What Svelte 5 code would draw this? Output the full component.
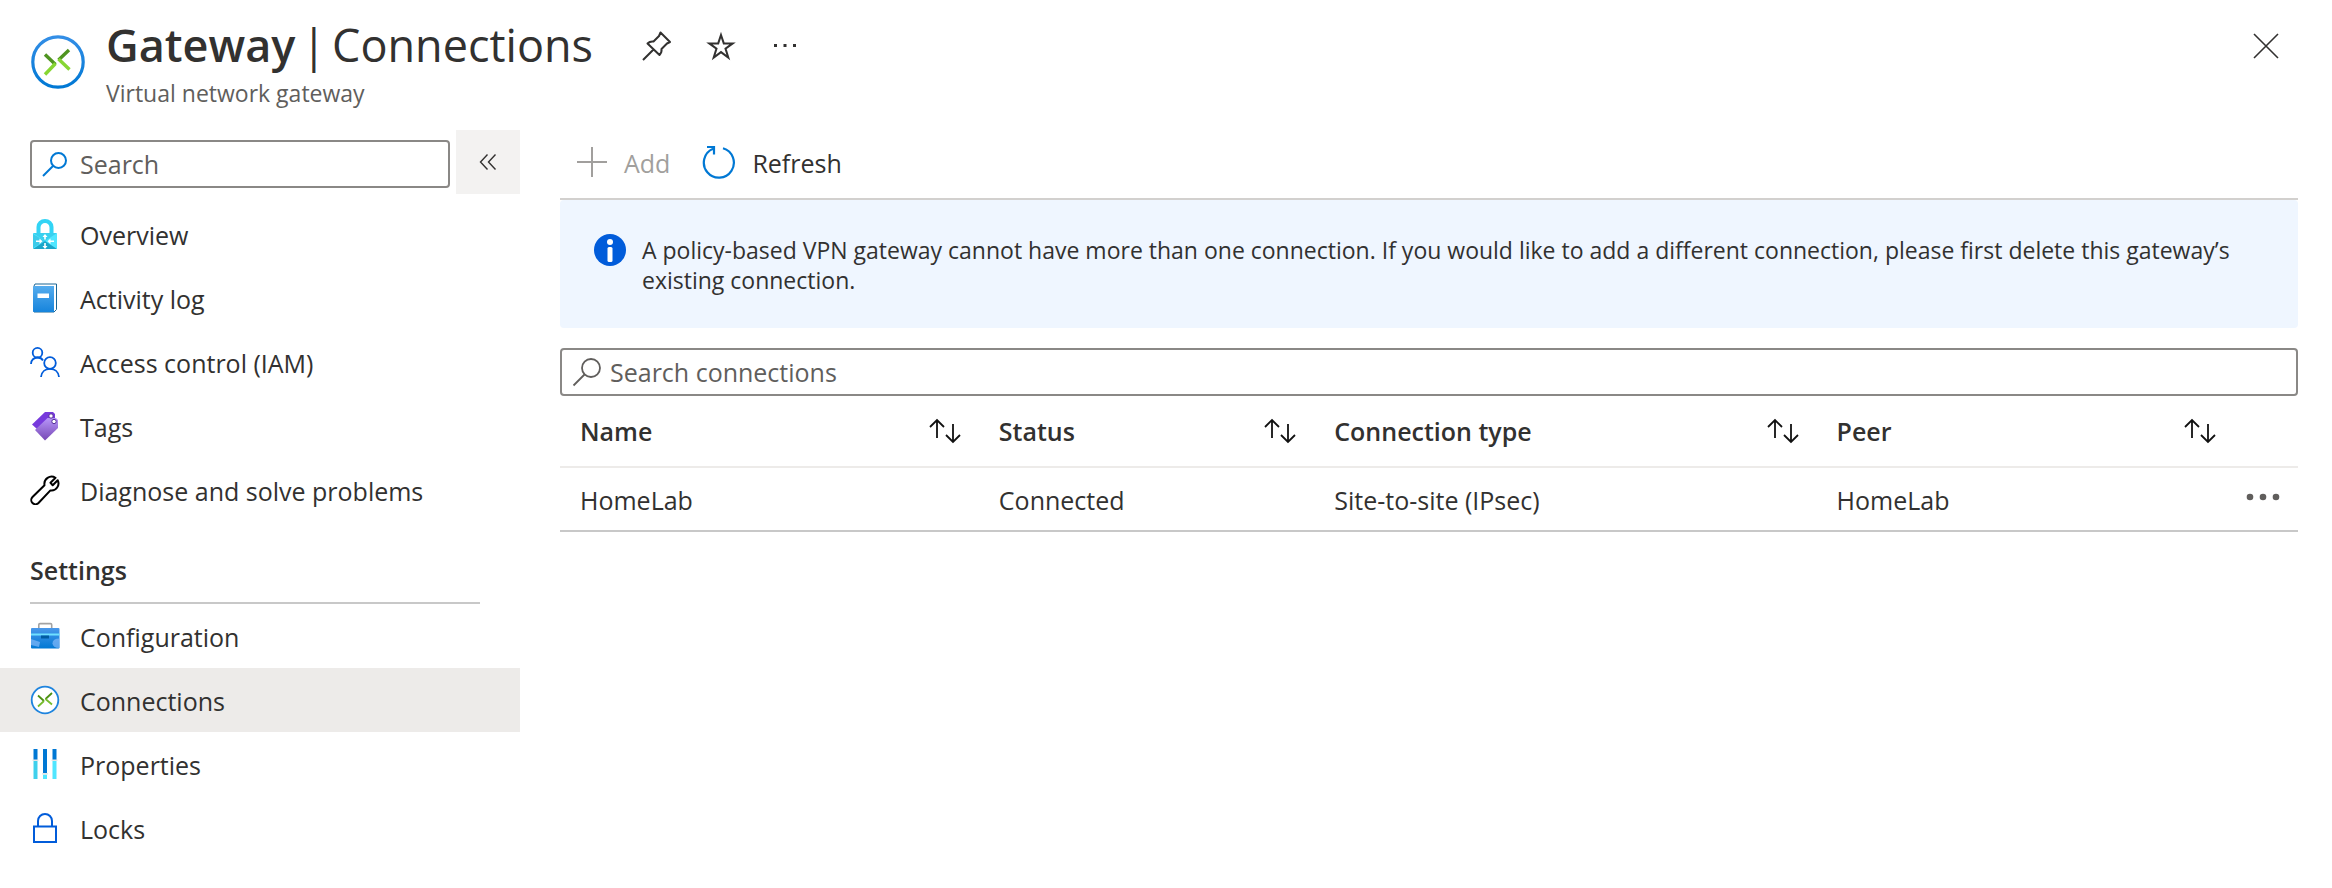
<script>
  const general = [
    { label: 'Overview', icon: 'gatewayLock' },
    { label: 'Activity log', icon: 'book' },
    { label: 'Access control (IAM)', icon: 'people' },
    { label: 'Tags', icon: 'tags' },
    { label: 'Diagnose and solve problems', icon: 'wrench' },
  ];
  const settings = [
    { label: 'Configuration', icon: 'toolbox' },
    { label: 'Connections', icon: 'connection', current: true },
    { label: 'Properties', icon: 'bars' },
    { label: 'Locks', icon: 'lock' },
  ];
  const columns = ['Name', 'Status', 'Connection type', 'Peer'];
  const rows = [['HomeLab', 'Connected', 'Site-to-site (IPsec)', 'HomeLab']];
</script>

{#snippet navIcon(name)}
  <svg class="nav-icon" viewBox="0 0 30 30" aria-hidden="true">
    {#if name === 'gatewayLock'}
      <path d="M6.500 15V8a8.500 8 0 0 1 17 0v7h-4V8.500a4.500 4.500 0 0 0-9 0V15z" fill="#32d4f5" />
      <rect x="3" y="14" width="24" height="16" rx="1" fill="#50e6ff" />
      <path d="M3 15v14l12-7z" fill="#3ccbea" />
      <path d="M3 14h24l-12 8z" fill="#38d0ef" />
      <path d="M3 30l12-8 12 8z" fill="#1ba6c9" />
      <path d="M15 15l2.500 3h-1.700V20.500h-1.600v-2.500h-1.700zM15 30l2.500-3h-1.700V24h-1.600v3h-1.700zM12.500 22.200l-3-2.700v2H6v1.500h3.500v2zM17.500 22.200l3-2.700v2H24v1.500h-3.500v2z" fill="#fff" />
    {:else if name === 'book'}
      <defs>
        <linearGradient id="cover" x1="0" y1="0" x2="0" y2="1"><stop offset="0" stop-color="#55acee" /><stop offset="1" stop-color="#1684dc" /></linearGradient>
      </defs>
      <path d="M5 1h21.500v25.500L24 29H4V3z" fill="#fff" stroke="#1b6695" stroke-width="1" />
      <path d="M4.500 3H24v26H4a1 1 0 0 1-1-1V4.500A1.500 1.500 0 0 1 4.500 3z" fill="url(#cover)" />
      <rect x="7.500" y="10.500" width="11.500" height="4.500" fill="#fff" />
    {:else if name === 'people'}
      <g fill="none" stroke="#015cda" stroke-width="1.800">
        <circle cx="7.500" cy="5.700" r="4.800" />
        <path d="M1 17c0-4 3-6.500 6.500-6.500 2.500 0 4.500 1 5.500 3" />
        <circle cx="20" cy="16" r="5.800" />
        <path d="M11 30c.5-5.500 4.500-8.200 9-8.200s8.500 2.700 9 8.200" />
      </g>
    {:else if name === 'tags'}
      <defs>
        <linearGradient id="tag" x1="0" y1="0" x2="0" y2="1"><stop offset="0" stop-color="#b796f9" /><stop offset="1" stop-color="#7646b4" /></linearGradient>
      </defs>
      <path d="M15 1h8l2 2v8L7 18l-5-4.500z" fill="#773adc" />
      <path d="M17.500 7H26l2 2v8L15 29.500 5 19z" fill="url(#tag)" />
      <circle cx="21" cy="5" r="2.200" fill="#fff" stroke="#552f99" />
      <circle cx="24" cy="10.500" r="2.200" fill="#fff" stroke="#552f99" />
    {:else if name === 'wrench'}
      <path d="M25.500 2.800 20.500 7.800l2.200 2.400 5-5c2.500 5-1.500 11-7.300 10.200L8.500 28a4.200 4.200 0 0 1-6-6L14.500 10.200C13.500 4 20 -0.500 25.500 2.800z" fill="none" stroke="#000" stroke-width="2" stroke-linejoin="round" />
    {:else if name === 'toolbox'}
      <defs>
        <linearGradient id="box" x1="0" y1="0" x2="0" y2="1"><stop offset="0" stop-color="#4a98ea" /><stop offset="1" stop-color="#0078d4" /></linearGradient>
      </defs>
      <path d="M8.800 8V3.800q0-1.200 1.200-1.200h10.500q1.200 0 1.200 1.200V8" fill="none" stroke="#a3a3a3" stroke-width="1.600" />
      <rect x="1" y="7" width="28.500" height="20.500" rx="1" fill="url(#box)" />
      <path d="M1 18l9 3-1 5-8-2z" fill="#83b9f9" opacity=".7" />
      <path d="M29.500 17.500v9.500q-7 0-7-4.700t7-4.800z" fill="#83b9f9" opacity=".7" />
      <rect x="1" y="12.500" width="28.500" height="2" fill="#6fe0ff" />
      <rect x="11" y="14.500" width="8" height="3" fill="#005ba1" />
    {:else if name === 'connection'}
      <circle cx="15" cy="15" r="13.300" fill="#fff" stroke="#1f84de" stroke-width="1.800" />
      <path d="M8 10.500l6 5.500M22 8l-6.500 6" fill="none" stroke="#4c8f12" stroke-width="1.800" />
      <path d="M14 16l-6 5.500M15.500 14l6.500 5.500" fill="none" stroke="#76bc2d" stroke-width="1.800" />
    {:else if name === 'bars'}
      <path d="M3.500 0h4v11h-4zM13 0h4v24.500h-4zM22.500 0h4v11h-4z" fill="#0078d4" />
      <path d="M13 25.500h4V30h-4zM22.500 12h4v18h-4z" fill="#50e6ff" />
      <path d="M3.500 12h4v18h-4z" fill="#3fd0ec" />
      <path d="M2.500 10.500h6v1.500h-6zM12 24h6v1.500h-6zM21.500 10.500h6v1.500h-6z" fill="#e6e6e6" />
    {:else if name === 'lock'}
      <g fill="none" stroke="#015cda" stroke-width="2">
        <path d="M8 13V8a7 7 0 0 1 14 0v5" />
        <rect x="4" y="13.500" width="22" height="15.500" />
      </g>
    {/if}
  </svg>
{/snippet}

{#snippet navList(items)}
  <ul>
    {#each items as item}
      <li>
        <a href="#{item.icon}" aria-current={item.current ? 'page' : undefined}>
          {@render navIcon(item.icon)}
          <span>{item.label}</span>
        </a>
      </li>
    {/each}
  </ul>
{/snippet}

<div class="blade">
  <header>
    <svg class="logo" viewBox="0 0 54 54" aria-hidden="true">
      <defs>
        <linearGradient id="ring" x1="0" y1="0" x2="0" y2="1"><stop offset="0" stop-color="#338ee6" /><stop offset="1" stop-color="#0078d4" /></linearGradient>
      </defs>
      <circle cx="27" cy="27" r="25.200" fill="#fff" stroke="url(#ring)" stroke-width="3.200" />
      <path d="M14 19.500 24.500 29.500M38 15 27.500 25" fill="none" stroke="#4f9420" stroke-width="3.400" />
      <path d="M24.500 28.500 14 39.500M27.500 24 38.500 34.500" fill="none" stroke="#86d633" stroke-width="3.400" />
    </svg>
    <div class="heading">
      <div class="title-row">
        <h1><strong>Gateway</strong><span>|</span><span>Connections</span></h1>
        <button type="button" aria-label="Pin">
          <svg width="32" height="32" viewBox="0 0 32 32"><path d="M19.500 2.500 29 12l-3 1.500-5.500 5.500q.5 3.500-2 6L6.500 13.500q2.500-2.500 6-2L18 6zM12.500 19.500 2 30" fill="none" stroke="#323130" stroke-width="2" stroke-linejoin="round" /></svg>
        </button>
        <button type="button" aria-label="Favorite">
          <svg width="32" height="32" viewBox="0 0 32 32"><path d="M16 5l2.800 8.400h8.900l-7.200 5.200 2.800 8.900-7.300-5.400-7.300 5.400 2.800-8.900-7.200-5.200h8.900z" fill="none" stroke="#323130" stroke-width="2" /></svg>
        </button>
        <button type="button" aria-label="More">
          <svg width="32" height="32" viewBox="0 0 32 32"><path d="M5 14h3v3H5zM14.500 14h3v3h-3zM24 14h3v3h-3z" fill="#323130" /></svg>
        </button>
      </div>
      <p>Virtual network gateway</p>
    </div>
    <button class="close" type="button" aria-label="Close">
      <svg width="26" height="26" viewBox="0 0 26 26"><path d="M1 1l24 24M25 1 1 25" stroke="#323130" stroke-width="1.600" /></svg>
    </button>
  </header>

  <div class="body">
    <nav aria-label="Resource menu">
      <div class="menu-search">
        <label class="field">
          <svg width="26" height="26" viewBox="0 0 26 26" aria-hidden="true"><circle cx="16.500" cy="9.500" r="7.500" fill="none" stroke="#0078d4" stroke-width="2" /><path d="M11 15 1 25" stroke="#0078d4" stroke-width="2" /></svg>
          <input type="text" placeholder="Search" aria-label="Search" />
        </label>
        <button class="collapse" type="button" aria-label="Collapse menu">
          <svg width="18" height="18" viewBox="0 0 18 18"><path d="M8.500 1.500 1.500 9l7 7.500M16.500 1.500 9.500 9l7 7.500" fill="none" stroke="#323130" stroke-width="1.400" /></svg>
        </button>
      </div>
      {@render navList(general)}
      <h2>Settings</h2>
      {@render navList(settings)}
    </nav>

    <main>
      <div class="toolbar">
        <button type="button" disabled>
          <svg width="32" height="32" viewBox="0 0 32 32" aria-hidden="true"><path d="M16 1v30M1 16h30" stroke="#a19f9d" stroke-width="2" /></svg>
          <span>Add</span>
        </button>
        <button type="button">
          <svg width="34" height="34" viewBox="0 0 34 34" aria-hidden="true"><path d="M21 3.200A15 15 0 1 1 11 3.800M5 2h7v7.500" fill="none" stroke="#0078d4" stroke-width="2.200" /></svg>
          <span>Refresh</span>
        </button>
      </div>

      <div class="notice" role="status">
        <svg width="32" height="32" viewBox="0 0 32 32" aria-hidden="true"><circle cx="16" cy="16" r="16" fill="#015cda" /><circle cx="16" cy="8" r="3" fill="#fff" /><rect x="13.500" y="13" width="5" height="15" rx="1.500" fill="#fff" /></svg>
        <p>A policy-based VPN gateway cannot have more than one connection. If you would like to add a different connection, please first delete this gateway’s existing connection.</p>
      </div>

      <label class="field filter">
        <svg width="30" height="30" viewBox="0 0 30 30" aria-hidden="true"><circle cx="19" cy="11" r="9" fill="none" stroke="#605e5c" stroke-width="1.800" /><path d="M12.500 17.500 1.500 28.500" stroke="#605e5c" stroke-width="1.800" /></svg>
        <input type="text" placeholder="Search connections" aria-label="Search connections" />
      </label>

      <table>
        <colgroup>
          <col class="c-name" /><col class="c-status" /><col class="c-type" /><col class="c-peer" /><col />
        </colgroup>
        <thead>
          <tr>
            {#each columns as column}
              <th scope="col">
                <button type="button">
                  <span>{column}</span>
                  <svg width="34" height="26" viewBox="0 0 34 26" aria-hidden="true"><path d="M9 20V2M2 9l7-7 7 7M25 6v18M18 17l7 7 7-7" fill="none" stroke="#111" stroke-width="1.800" /></svg>
                </button>
              </th>
            {/each}
            <td></td>
          </tr>
        </thead>
        <tbody>
          {#each rows as row}
            <tr>
              {#each row as cell}
                <td>{cell}</td>
              {/each}
              <td class="actions">
                <button type="button" aria-label="Row actions">
                  <svg width="34" height="8" viewBox="0 0 34 8"><g fill="#605e5c"><circle cx="4" cy="4" r="3.300" /><circle cx="17" cy="4" r="3.300" /><circle cx="30" cy="4" r="3.300" /></g></svg>
                </button>
              </td>
            </tr>
          {/each}
        </tbody>
      </table>
    </main>
  </div>
</div>

<style>
  :global(body) {
    background: #fff;
  }
  .blade {
    font-family: 'Open Sans', 'Noto Sans', sans-serif;
    font-size: 25px;
    line-height: 32px;
    color: #323130;
  }
  .blade * {
    box-sizing: border-box;
  }
  h1,
  h2,
  p,
  ul {
    margin: 0;
    padding: 0;
  }
  ul {
    list-style: none;
  }
  svg {
    display: block;
    flex: none;
  }
  button {
    display: flex;
    align-items: center;
    padding: 0;
    border: 0;
    background: none;
    font: inherit;
    color: inherit;
  }
  header {
    display: flex;
    align-items: flex-start;
    padding: 15px 53px 0 31px;
    height: 130px;
  }
  .logo {
    width: 54px;
    height: 54px;
    margin: 20px 21px 0 0;
  }
  .heading {
    flex: 1;
  }
  .title-row {
    display: flex;
    align-items: center;
    gap: 32px;
    height: 60px;
  }
  .title-row button {
    padding-top: 2px;
  }
  h1 {
    display: flex;
    gap: 6px;
    margin-right: 16px;
    font-size: 45px;
    line-height: 60px;
    font-weight: 400;
  }
  .title-row h1 {
    margin-right: 16px;
  }
  h1 strong {
    font-weight: 600;
  }
  .heading p {
    font-size: 23px;
    line-height: 36px;
    color: #605e5c;
  }
  .close {
    margin-top: 18px;
  }
  .body {
    display: flex;
    gap: 40px;
    padding-right: 34px;
  }
  nav {
    flex: none;
    width: 520px;
  }
  .menu-search {
    display: flex;
    align-items: center;
    gap: 6px;
    padding-left: 30px;
    margin-bottom: 8px;
  }
  .field {
    display: flex;
    flex: 1;
    align-items: center;
    gap: 12px;
    height: 48px;
    padding: 0 10px;
    border: 2px solid #8a8886;
    border-radius: 4px;
  }
  .menu-search .field {
    margin-top: 4px;
  }
  input {
    flex: 1;
    min-width: 0;
    padding: 0;
    border: 0;
    outline: 0;
    background: none;
    font: inherit;
    color: inherit;
  }
  input::placeholder {
    color: #605e5c;
    opacity: 1;
  }
  .collapse {
    justify-content: center;
    width: 64px;
    height: 64px;
    background: #f3f2f1;
  }
  nav a {
    display: flex;
    align-items: center;
    gap: 20px;
    height: 64px;
    padding-left: 30px;
    color: inherit;
    text-decoration: none;
  }
  nav a span,
  .toolbar span {
    padding-top: 2px;
  }
  nav a[aria-current] {
    background: #edebe9;
  }
  .nav-icon {
    width: 30px;
    height: 30px;
  }
  h2 {
    margin: 0 40px 0 30px;
    padding: 32px 0 16px;
    border-bottom: 2px solid #c8c8c8;
    font-size: 25px;
    line-height: 32px;
    font-weight: 600;
  }
  main {
    flex: 1;
    min-width: 0;
  }
  .toolbar {
    display: flex;
    gap: 32px;
    height: 70px;
    padding-left: 16px;
    border-bottom: 2px solid #d2d0ce;
  }
  .toolbar button {
    gap: 16px;
    height: 64px;
  }
  .toolbar button:disabled {
    color: #a19f9d;
  }
  .notice {
    display: flex;
    gap: 16px;
    padding: 34px 34px 32px;
    min-height: 128px;
    border-radius: 4px;
    background: #eff6ff;
  }
  .notice p {
    padding-top: 1px;
    font-size: 23px;
    line-height: 30px;
  }
  .filter {
    gap: 8px;
    margin-top: 20px;
  }
  table {
    width: 100%;
    table-layout: fixed;
    border-collapse: collapse;
  }
  .c-name {
    width: 24.1%;
  }
  .c-status {
    width: 19.3%;
  }
  .c-type {
    width: 28.9%;
  }
  .c-peer {
    width: 24%;
  }
  th,
  td {
    padding: 0 17px 0 20px;
    text-align: left;
  }
  thead tr {
    height: 71px;
    border-bottom: 2px solid #edebe9;
  }
  tbody tr {
    height: 64px;
    border-bottom: 2px solid #c8c8c8;
  }
  tbody td {
    padding-top: 2px;
  }
  th button {
    justify-content: space-between;
    width: 100%;
    font-weight: 600;
  }
  tbody .actions {
    padding: 0 18px 4px 0;
  }
  .actions button {
    margin-left: auto;
  }
</style>
